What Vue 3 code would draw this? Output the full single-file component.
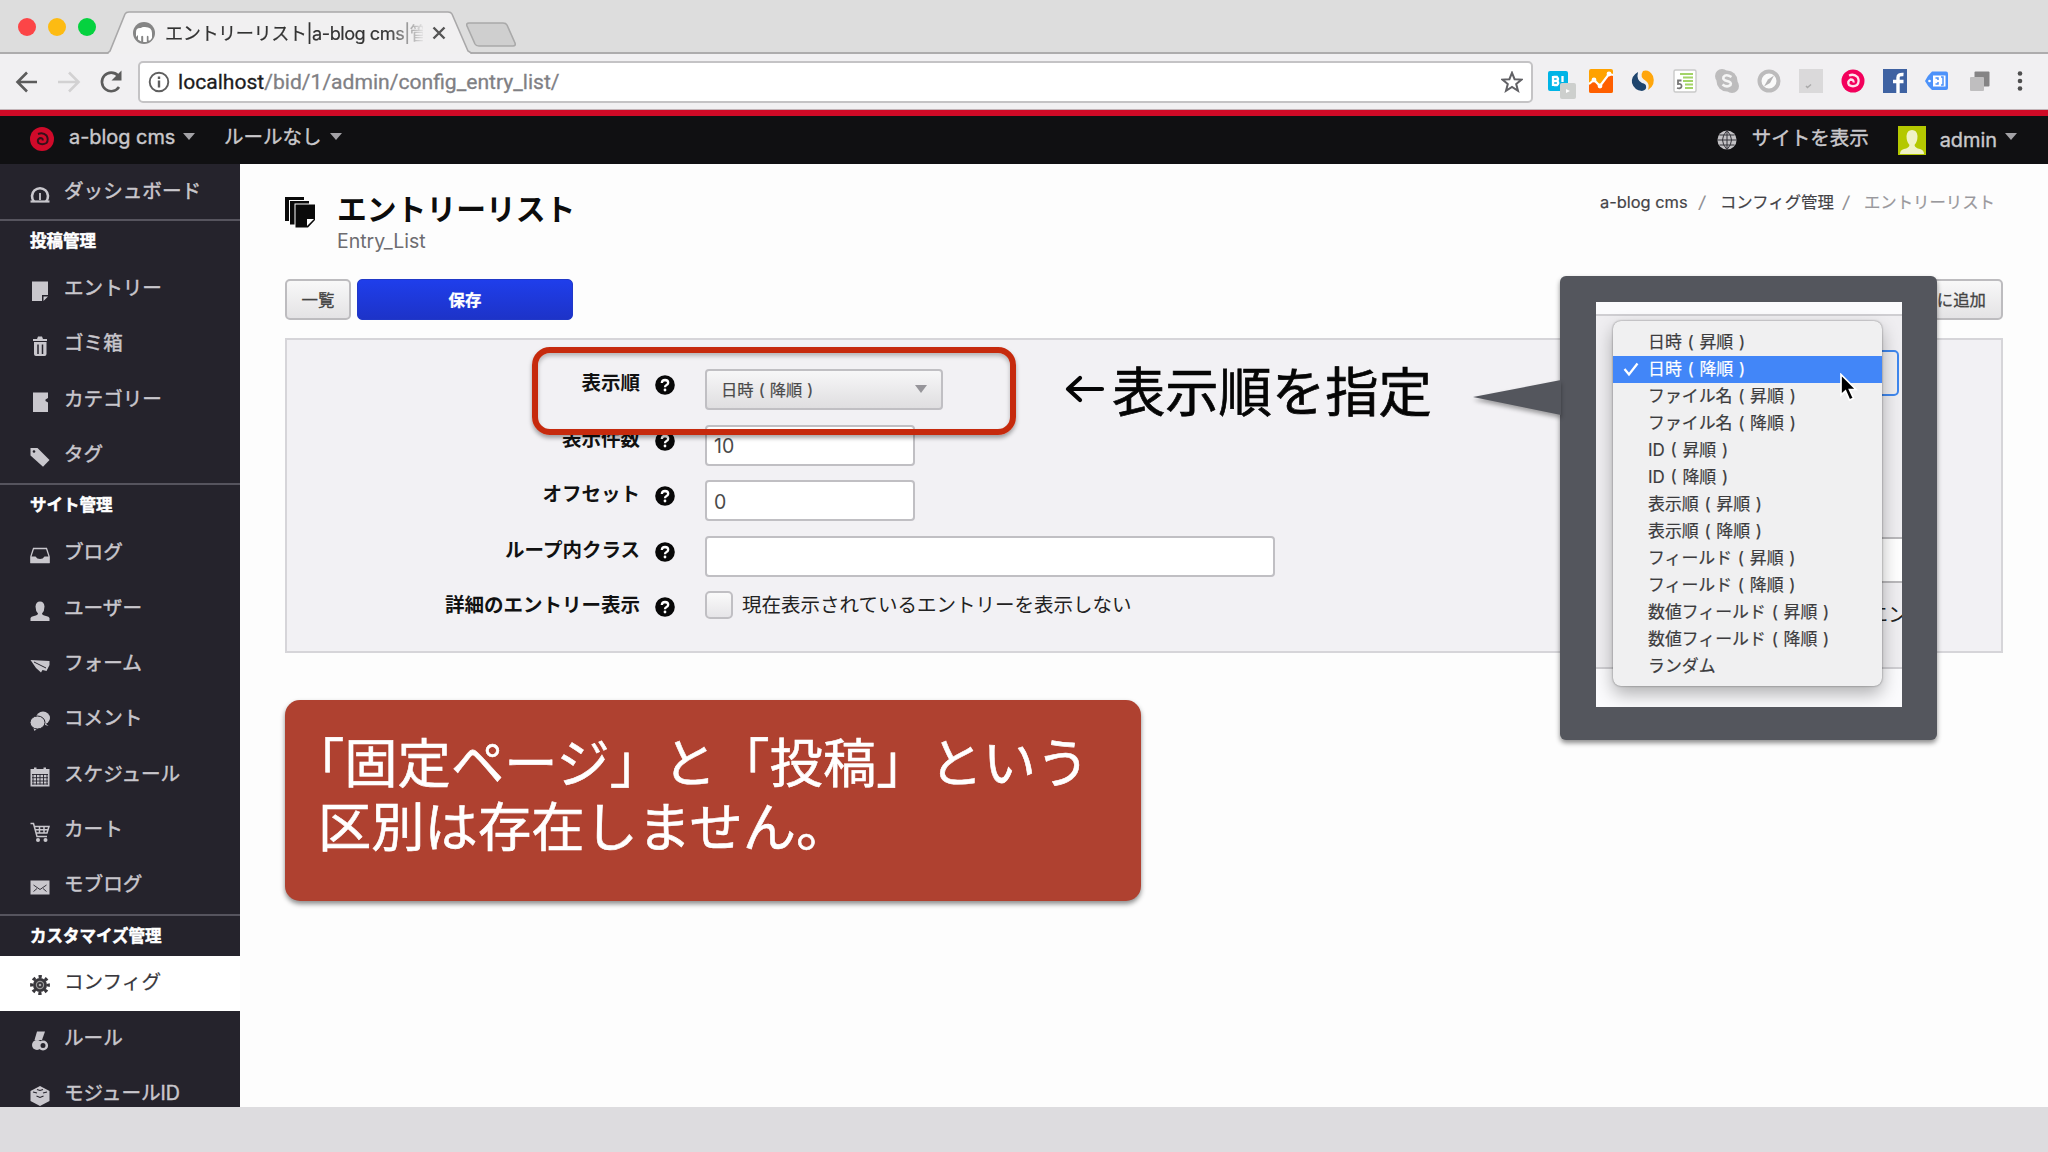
<template>
  <div class="screen">
    <div class="tabstrip">
      <div class="lights">
        <span class="light red"></span>
        <span class="light yellow"></span>
        <span class="light green"></span>
      </div>
      <div class="tab">
        <svg class="tab-shape" width="366" height="43" viewBox="0 0 366 43">
          <path d="M0 42.5 L3 40 L18 3 Q19 1 22 1 H341 Q344 1 345 3 L361 40 L365 42.5" fill="#f1f0f1" stroke="#a9a8a9" stroke-width="1.6" />
          <path d="M2 43 H363" stroke="#f1f0f1" stroke-width="2" />
        </svg>
        <svg class="favicon" width="24" height="24" viewBox="0 0 24 24">
          <circle cx="12" cy="12" r="11" fill="#858585" />
          <path d="M4 16 V11 Q4 6.500 9 7 Q10 5.500 13 6 Q20 6 20 12 V17 L18 19.500 H16.500 V15.500 Q15.500 14 14.800 15.500 V21 H11.200 V15.500 Q10.200 14 9.200 15.500 V20.500 L6 18.500 V14 Z" fill="#fff" />
        </svg>
        <span class="tab-title">エントリーリスト|a-blog cms|管</span>
        <svg class="tab-close" width="14" height="14" viewBox="0 0 14 14"><path d="M1.500 1.500 L12.500 12.500 M12.500 1.500 L1.500 12.500" stroke="#555" stroke-width="2.4" /></svg>
      </div>
      <svg class="new-tab" width="52" height="26" viewBox="0 0 52 26">
        <path d="M4 1 H38 Q41 1 42 3 L50 21 Q51 24 48 24 H14 Q11 24 10 22 L2 4 Q1 1 4 1 Z" fill="#cfcfcf" stroke="#a9a9a9" stroke-width="1.6" />
      </svg>
    </div>

    <div class="toolbar">
      <svg class="nav" width="128" height="30" viewBox="0 0 128 30" fill="none" stroke-width="2.6">
        <path d="M28 15 H9 M18 5.500 L8.500 15 L18 24.500" stroke="#5c5c5c" />
        <path d="M49 15 H68 M60 5.500 L69.500 15 L60 24.500" stroke="#d2d1d2" />
        <path d="M110 20 A9.300 9.300 0 1 1 109 8.500" stroke="#5c5c5c" />
        <path d="M112.500 3.500 V13.500 H102.500 Z" fill="#5c5c5c" />
      </svg>
      <div class="urlbar">
        <svg width="22" height="22" viewBox="0 0 22 22">
          <circle cx="11" cy="11" r="9.300" fill="none" stroke="#5f5f5f" stroke-width="1.9" />
          <path d="M11 9.500 V16.500 M11 5.500 V8" stroke="#5f5f5f" stroke-width="2.400" />
        </svg>
        <span class="url"><b>localhost</b>/bid/1/admin/config_entry_list/</span>
        <svg width="22" height="22" viewBox="0 0 22 22">
          <path d="M11 1.800 L13.600 8.200 L20.500 8.600 L15.200 13 L17 19.800 L11 16 L5 19.800 L6.800 13 L1.500 8.600 L8.400 8.200 Z" fill="none" stroke="#616165" stroke-width="2" />
        </svg>
      </div>
      <div class="extensions">
        <svg viewBox="0 0 30 30">
          <rect x="4" y="5" width="20" height="20" rx="2" fill="#00b4e6" />
          <path d="M9 10 V20 M9.500 11 H13 Q15 13 13 15 H10 M13 15 Q15.500 17 13 19 H10 M18.500 10 V16 M18.500 18 V20" fill="none" stroke="#fff" stroke-width="2.300" />
          <rect x="16" y="17" width="16" height="16" rx="2" fill="#cdcfcd" />
          <path d="M22 23 L26 25 L22 27 Z" fill="#fff" />
        </svg>
        <svg viewBox="0 0 30 30">
          <rect x="3" y="3" width="24" height="24" rx="2" fill="#ffa200" />
          <path d="M3 19 L8 14 L14 20 L23 7 L27 10 V25 Q27 27 25 27 H5 Q3 27 3 25 Z" fill="#ff5f00" />
          <path d="M3 18 L8 14 L14 20 L23 8 L27 9" fill="none" stroke="#fff" stroke-width="2.200" />
          <g fill="#fff"><circle cx="8" cy="14" r="2.400" /><circle cx="14" cy="20" r="2.400" /><circle cx="23" cy="8" r="2.400" /></g>
        </svg>
        <svg viewBox="0 0 30 30">
          <path d="M10 6 Q3 10 4 17 Q6 24 14 25 Q19 24 18 20 Q18 18 14 17 Q8 14 10 6 Z" fill="#1f456e" />
          <path d="M15 5 Q21 3 25 10 Q28 19 20 24 Q22 18 18 15 Q11 11 15 5 Z" fill="#ffa60c" />
        </svg>
        <svg viewBox="0 0 30 30">
          <rect x="4" y="4" width="22" height="22" rx="1.500" fill="#fff" stroke="#c9c9c9" stroke-width="1.400" />
          <path d="M10 8 H23 M13 11.500 H23 M13 15 H23 M15 18.500 H23 M15 22 H23" stroke="#a3d468" stroke-width="2" />
          <path d="M11.500 14.500 H8 V18 Q12 17.500 11.500 20.500 Q11 23 7 22" fill="none" stroke="#777" stroke-width="1.800" />
        </svg>
        <svg viewBox="0 0 30 30">
          <circle cx="10" cy="10" r="7" fill="#bdbcbd" /><circle cx="20" cy="20" r="7" fill="#bdbcbd" /><circle cx="15" cy="15" r="10.500" fill="#bdbcbd" />
          <path d="M19.500 11 Q14 7.500 11.500 11 Q10.500 14 15 15 Q20 16 18.500 19 Q15 22 10.500 18.500" fill="none" stroke="#f5f5f5" stroke-width="2.600" />
        </svg>
        <svg viewBox="0 0 30 30">
          <circle cx="15" cy="15" r="9.500" fill="#fafafa" stroke="#bcbbbc" stroke-width="4" />
          <path d="M20 9.500 L16 17 L10 20.500 L14 13.500 Z" fill="#b5b4b5" />
        </svg>
        <svg viewBox="0 0 30 30"><rect x="3" y="3" width="24" height="24" fill="#dad9da" /><path d="M10 20 L11.500 21.500 L15 18.500" fill="none" stroke="#aaa" stroke-width="1.500" /></svg>
        <svg viewBox="0 0 30 30">
          <circle cx="15" cy="15" r="11.500" fill="#f3005c" />
          <path d="M11 9.500 Q16 7.500 19.500 11 Q22 15.500 19 19 Q15 21.500 11 19 Q9 15.500 12.500 13.500 Q16 13.500 15.500 16.500" fill="none" stroke="#ffe3ec" stroke-width="2.300" />
        </svg>
        <svg viewBox="0 0 30 30">
          <rect x="3" y="3" width="24" height="24" fill="#3f62a2" />
          <path d="M18 27 V11.500 Q18 8 23.500 8.500 M13 15.500 H23.500" fill="none" stroke="#fff" stroke-width="3.400" />
        </svg>
        <svg viewBox="0 0 30 30">
          <path d="M10 5.500 H24 Q26 5.500 26 7.500 V22 Q26 24 24 24 H10 Q6 21 3 15 Q6 9 10 5.500 Z" fill="#4c92fa" />
          <rect x="11" y="9.500" width="12.500" height="11" fill="#fff" /><circle cx="7.500" cy="15" r="1.300" fill="#fff" />
          <path d="M13.500 12 H16 V14 M13.500 18 H16 V16 M19 11 H21 V19 H19" fill="none" stroke="#4c92fa" stroke-width="1.500" />
        </svg>
        <svg viewBox="0 0 30 30">
          <rect x="10.500" y="5.500" width="15" height="15" rx="1" fill="#858485" /><rect x="6" y="11" width="14" height="14" rx="1" fill="#bfbebf" />
        </svg>
        <svg viewBox="0 0 30 30" fill="#4f4f4f"><circle cx="14" cy="7.500" r="2.300" /><circle cx="14" cy="15" r="2.300" /><circle cx="14" cy="22.500" r="2.300" /></svg>
      </div>
    </div>

    <header class="topbar">
      <svg class="logo" width="24" height="24" viewBox="0 0 24 24">
        <circle cx="12" cy="12" r="12" fill="#d00a2a" />
        <path d="M8 7 Q13 5 16.500 8.500 Q19 12.500 16.500 16 Q12 18.500 8.500 16 Q6.500 12.500 10 11 Q13.500 11 12.500 13.500" fill="none" stroke="#35101a" stroke-width="2" />
      </svg>
      <span class="top-text blog-name">a-blog cms</span>
      <span class="caret"></span>
      <span class="top-text rule-name">ルールなし</span>
      <span class="caret"></span>
      <span class="spacer"></span>
      <svg width="20" height="20" viewBox="0 0 20 20">
        <circle cx="10" cy="10" r="9.600" fill="#c3c2c5" />
        <path d="M0 10 H20 M10 0 V20 M2.500 5 H17.500 M2.500 15 H17.500 M10 0.500 Q1 10 10 19.500 Q19 10 10 0.500" fill="none" stroke="#35343a" stroke-width="1" />
      </svg>
      <span class="top-text view-site">サイトを表示</span>
      <svg class="avatar" width="28" height="29" viewBox="0 0 28 29">
        <rect width="28" height="29" fill="#b4c800" />
        <path d="M2 28 Q2 24 6 23 Q11 22 11.500 19 Q8.500 16 8.500 10 Q9 4 14 4 Q19 4 19.500 10 Q19.500 16 16.500 19 Q17 22 22 23 Q26 24 26 28 Z" fill="#f0f2c6" />
      </svg>
      <span class="top-text admin">admin</span>
      <span class="caret"></span>
    </header>

    <div class="body">
      <nav class="sidebar">
        <ul v-for="(group, i) in menu" :key="i" class="group">
          <li v-if="group.title" class="heading">{{ group.title }}</li>
          <li v-for="item in group.items" :key="item.label" class="item" :class="{ active: item.active }">
            <svg width="20" height="20" viewBox="0 0 20 20" v-html="icons[item.icon]"></svg>
            <span>{{ item.label }}</span>
          </li>
        </ul>
      </nav>

      <main class="content">
        <div class="page-head">
          <svg class="page-icon" width="32" height="32" viewBox="0 0 32 32">
            <path d="M0 0 H19 V3 H4 V24 H0 Z M5 4 H24 V6.500 H9.500 V27.500 H5 Z M10.500 7.500 H30 V23 L23 30.500 H10.500 Z" fill="#0a0a0a" />
            <path d="M22 29 V22 H29 Z" fill="#fff" />
          </svg>
          <div class="titles">
            <h1>エントリーリスト</h1>
            <p>Entry_List</p>
          </div>
          <div class="breadcrumb">
            <span class="crumb-home">a-blog cms</span><i>/</i><span>コンフィグ管理</span><i>/</i><span class="current">エントリーリスト</span>
          </div>
        </div>

        <div class="actions">
          <button class="btn list">一覧</button>
          <button class="btn save">保存</button>
          <button class="btn quick">に追加</button>
        </div>

        <section class="panel">
          <div v-for="row in rows" :key="row.label" class="row">
            <label>{{ row.label }}</label>
            <svg class="help" width="20" height="20" viewBox="0 0 20 20">
              <circle cx="10" cy="10" r="9.800" fill="#080808" />
              <path d="M6.800 8 Q7 5 10 5 Q13.200 5.200 13.200 7.800 Q13 9.500 11.200 10.200 Q10 10.800 10 12.200" fill="none" stroke="#fff" stroke-width="2.300" />
              <circle cx="10" cy="15" r="1.400" fill="#fff" />
            </svg>
            <div v-if="row.type === 'select'" class="select"><span>{{ row.value }}</span><b></b></div>
            <div v-else-if="row.type === 'check'" class="check"><b></b><span>{{ row.value }}</span></div>
            <div v-else class="input" :class="row.type">{{ row.value }}</div>
          </div>
        </section>
      </main>
    </div>

    <div class="desk"></div>

    <div class="highlight"></div>
    <div class="note">
      <svg width="40" height="28" viewBox="0 0 40 28"><path d="M37 14 H4 M15 3 L3 14 L15 25" fill="none" stroke="#050505" stroke-width="4.200" stroke-linecap="round" stroke-linejoin="round" /></svg>
      <span>表示順を指定</span>
    </div>

    <div class="message">
      <p class="first">「固定ページ」と「投稿」という</p>
      <p>区別は存在しません。</p>
    </div>

    <div class="callout">
      <svg class="pointer" width="88" height="36" viewBox="0 0 88 36"><path d="M88 1 L0 18 L88 36 Z" fill="#54565d" /></svg>
      <div class="view">
        <div class="view-panel">
          <div class="view-select"></div>
          <div class="view-input"></div>
          <div class="view-text">エン</div>
        </div>
        <ul class="popup">
          <li v-for="(option, i) in options" :key="option" :class="{ picked: i === 1 }">
            <svg width="16" height="16" viewBox="0 0 16 16"><path v-if="i === 1" d="M1.500 8 L6 13.500 L14.500 2.500" fill="none" stroke="#fff" stroke-width="2.300" /></svg>
            <span>{{ option }}</span>
          </li>
        </ul>
        <svg class="cursor" width="20" height="30" viewBox="0 0 20 30">
          <path d="M2 1.500 V22 L6.500 18 L10.500 27 L14.500 25.200 L10.500 16.500 H17 Z" fill="#000" stroke="#fff" stroke-width="1.700" />
        </svg>
      </div>
    </div>
  </div>
</template>

<script setup>
const menu = [
  { items: [{ label: 'ダッシュボード', icon: 'gauge' }] },
  {
    title: '投稿管理',
    items: [
      { label: 'エントリー', icon: 'note' },
      { label: 'ゴミ箱', icon: 'trash' },
      { label: 'カテゴリー', icon: 'category' },
      { label: 'タグ', icon: 'tag' },
    ],
  },
  {
    title: 'サイト管理',
    items: [
      { label: 'ブログ', icon: 'tray' },
      { label: 'ユーザー', icon: 'user' },
      { label: 'フォーム', icon: 'plane' },
      { label: 'コメント', icon: 'comment' },
      { label: 'スケジュール', icon: 'calendar' },
      { label: 'カート', icon: 'cart' },
      { label: 'モブログ', icon: 'mail' },
    ],
  },
  {
    title: 'カスタマイズ管理',
    items: [
      { label: 'コンフィグ', icon: 'gear', active: true },
      { label: 'ルール', icon: 'rule' },
      { label: 'モジュールID', icon: 'box' },
    ],
  },
];

// 20x20 のアイコン。色は currentColor、抜きは var(--bg)
const icons = {
  gauge: '<path d="M4 17.500 A8 8 0 1 1 16 17.500" fill="none" stroke="currentColor" stroke-width="2.600"/><path d="M0.500 17.500 H19.500" stroke="currentColor" stroke-width="2.200"/><path d="M10 9 V16" stroke="currentColor" stroke-width="1.800"/>',
  note: '<path d="M2 0.500 H18 V14 H12 V20 H2 Z M13.500 15.500 H18 L13.500 20 Z" fill="currentColor"/>',
  trash: '<path d="M3 3 H7 L8 0.500 H12 L13 3 H17 V5 H3 Z M4 6 H16.500 V18 Q16.500 20 14.500 20 H6 Q4 20 4 18 Z" fill="currentColor"/><path d="M8 8.500 V18 M12.500 8.500 V18" stroke="var(--bg)" stroke-width="1.500"/>',
  category: '<path d="M3 0.500 H18 V6 L15.500 7.500 V9 L18 10.500 V20 H3 Z" fill="currentColor"/>',
  tag: '<path d="M0.500 1 H7.500 L19.500 13 L13 19.800 L0.500 8.500 Z" fill="currentColor"/><circle cx="4" cy="4.500" r="1.300" fill="var(--bg)"/>',
  tray: '<path d="M3.500 3.500 H16.500 L19 11 V17.500 H1 V11 Z" fill="none" stroke="currentColor" stroke-width="1.300"/><path d="M0.500 11.500 H5.500 Q7 14 10 14 Q13 14 14.500 11.500 H19.500 V18 H0.500 Z" fill="currentColor"/>',
  user: '<path d="M0.500 20 V17 Q1 15.500 4 15 Q8 14 8 12.500 Q5.500 10 5.500 5.500 Q6 0.500 10 0.500 Q14 0.500 14.500 5.500 Q14.500 10 12 12.500 Q12 14 16 15 Q19 15.500 19.500 17 V20 Z" fill="currentColor"/>',
  plane: '<path d="M0.500 4 L19.500 5 V9 L16.500 15 L12.500 14 L11 16.500 L6 12 Z" fill="currentColor"/><path d="M4 6 L16 12" stroke="var(--bg)" stroke-width="1"/>',
  comment: '<ellipse cx="13" cy="7" rx="7" ry="6.500" fill="currentColor"/><path d="M15 12 L18.500 15 L12 13 Z M3 16 L4.500 20 L9 16 Z" fill="currentColor"/><ellipse cx="7.500" cy="11.500" rx="7.500" ry="6.500" fill="currentColor" stroke="var(--bg)"/>',
  calendar: '<path d="M0.500 2 H4 V0.500 H6.500 V2 H13.500 V0.500 H16 V2 H19.500 V19.500 H0.500 Z" fill="currentColor"/><path d="M2 7.500 H18 M2 10.700 H18 M2 14 H18 M2 17 H18 M3 7 V17.500 M6.500 7 V17.500 M10 7 V17.500 M13.500 7 V17.500 M17 7 V17.500" stroke="var(--bg)" stroke-width="0.900"/>',
  cart: '<path d="M0.500 1.500 H3.500 L7 14.500 H17 M4.500 4.500 H19 L17 11 H6 M5 7.700 H18 M9.500 4.500 V11 M14 4.500 V11" fill="none" stroke="currentColor" stroke-width="1.500"/><circle cx="8" cy="18" r="2" fill="currentColor"/><circle cx="15.500" cy="18" r="2" fill="currentColor"/>',
  mail: '<rect x="0.500" y="3.500" width="19" height="14" fill="currentColor"/><path d="M3.500 8 L10 12.500 L16.500 8 M3.500 14.500 L7 11.500 M16.500 14.500 L13 11.500" fill="none" stroke="var(--bg)" stroke-width="0.900"/>',
  gear: '<circle cx="10" cy="10" r="7" fill="currentColor"/><circle cx="10" cy="10" r="8.300" fill="none" stroke="currentColor" stroke-width="3.200" stroke-dasharray="3.250 3.250" stroke-dashoffset="1.600"/><circle cx="10" cy="10" r="3.600" fill="none" stroke="#999" stroke-width="1.200"/><circle cx="10" cy="10" r="1.300" fill="#aaa"/>',
  rule: '<path d="M7 0.500 H15 L12 9 H4.500 Z" fill="currentColor"/><circle cx="7" cy="14" r="5" fill="currentColor"/><circle cx="13" cy="14.500" r="3.800" fill="var(--bg)" stroke="currentColor" stroke-width="2.600"/>',
  box: '<path d="M10 0 L19.500 5 V15 L10 20 L0.500 15 V5 Z" fill="currentColor"/><path d="M3 6 L7 7 M13 7 L17 6 M6.500 10 L10 11.500 L13.500 10 M7 3.500 L10 4.500 L13 3.500" fill="none" stroke="var(--bg)" stroke-width="1.100"/>',
};

const rows = [
  { label: '表示順', type: 'select', value: '日時 ( 降順 )' },
  { label: '表示件数', type: 'short', value: '10' },
  { label: 'オフセット', type: 'short', value: '0' },
  { label: 'ループ内クラス', type: 'long', value: '' },
  { label: '詳細のエントリー表示', type: 'check', value: '現在表示されているエントリーを表示しない' },
];

const options = [
  '日時 ( 昇順 )',
  '日時 ( 降順 )',
  'ファイル名 ( 昇順 )',
  'ファイル名 ( 降順 )',
  'ID ( 昇順 )',
  'ID ( 降順 )',
  '表示順 ( 昇順 )',
  '表示順 ( 降順 )',
  'フィールド ( 昇順 )',
  'フィールド ( 降順 )',
  '数値フィールド ( 昇順 )',
  '数値フィールド ( 降順 )',
  'ランダム',
];
</script>

<style>
html,
body {
  margin: 0;
  overflow: hidden;
}
</style>

<style scoped>
.screen {
  position: relative;
  display: flex;
  flex-direction: column;
  width: 2048px;
  height: 1152px;
  overflow: hidden;
  background: #fdfdfd;
  font-family: Inter, "Noto Sans CJK JP", sans-serif;
  color: #222;
}
.screen * {
  box-sizing: border-box;
}
ul,
p,
h1 {
  margin: 0;
  padding: 0;
  list-style: none;
}
svg {
  flex: none;
}

/* ブラウザ */
.tabstrip {
  display: flex;
  flex: none;
  height: 54px;
  background: #dddddd;
  border-bottom: 2px solid #adacad;
}
.lights {
  display: flex;
  gap: 12px;
  width: 107px;
  padding: 18px 0 0 18px;
}
.light {
  width: 18px;
  height: 18px;
  border-radius: 50%;
}
.red { background: #fc4547; }
.yellow { background: #fdbb12; }
.green { background: #05d23f; }
.tab {
  position: relative;
  display: flex;
  align-items: center;
  width: 366px;
  height: 43px;
  margin-top: 11px;
  padding-left: 25px;
}
.tab-shape {
  position: absolute;
  left: 0;
  top: 0;
}
.favicon {
  position: relative;
}
.tab-title {
  position: relative;
  width: 258px;
  margin-left: 9px;
  overflow: hidden;
  font-size: 18.200px;
  line-height: 28px;
  letter-spacing: -0.500px;
  white-space: nowrap;
  color: #333;
  -webkit-text-stroke: 0.200px currentColor;
  -webkit-mask-image: linear-gradient(to right, #000 86%, transparent 101%);
  mask-image: linear-gradient(to right, #000 86%, transparent 101%);
}
.tab-close {
  position: relative;
  margin-left: 9px;
}
.new-tab {
  margin: 22px 0 0 -8px;
}
.toolbar {
  display: flex;
  flex: none;
  align-items: center;
  height: 56px;
  background: #f1f0f2;
  border-bottom: 1px solid #c3b4b8;
}
.nav {
  margin-left: 8px;
  width: 130px;
}
.urlbar {
  display: flex;
  align-items: center;
  width: 1395px;
  height: 42px;
  padding: 0 8px 0 8px;
  background: #fff;
  border: 2px solid #c4c3c5;
  border-radius: 5px;
}
.url {
  flex: 1;
  margin-left: 8px;
  font: 21.100px Roboto, sans-serif;
  color: #808084;
  -webkit-text-stroke: 0.300px currentColor;
}
.url b {
  font-weight: 400;
  color: #1c1c1e;
}
.extensions {
  display: flex;
  gap: 12px;
  margin: -1px 0 0 11px;
}
.extensions svg {
  width: 30px;
  height: 30px;
  overflow: visible;
}

/* ヘッダー */
.topbar {
  display: flex;
  flex: none;
  align-items: center;
  height: 54px;
  padding: 0 31px 0 30px;
  border-top: 6px solid #cf0a26;
  background: #101012;
  color: #c9c8cb;
}
.logo {
  margin-top: -2px;
}
.top-text {
  font-size: 19.500px;
  line-height: 28px;
  white-space: nowrap;
  -webkit-text-stroke: 0.400px currentColor;
}
.blog-name {
  width: 109px;
  margin: -6px 5px 0 15px;
  font-size: 19.900px;
}
.rule-name {
  margin: -6px 8px 0 29px;
}
.caret {
  margin-top: -8px;
  border: 6px solid transparent;
  border-top: 7px solid #a3a2a6;
  border-bottom: 0;
}
.spacer {
  flex: 1;
}
.view-site {
  margin: -4px 29px 0 15px;
}
.avatar {
  margin-top: 1px;
}
.admin {
  margin: -1px 8px 0 14px;
  font-size: 19.900px;
}

/* サイドバー */
.body {
  display: flex;
  flex: none;
  height: 943px;
  overflow: hidden;
}
.sidebar {
  --bg: #25232c;
  flex: none;
  width: 240px;
  background: #25232c;
  color: #c9c7cd;
}
.group + .group {
  padding-bottom: 0.500px;
  border-top: 2px solid #56545e;
}
.heading {
  height: 40px;
  padding-left: 30px;
  font-size: 16.500px;
  font-weight: 700;
  line-height: 41px;
  color: #fff;
  -webkit-text-stroke: 0.500px #fff;
}
.item {
  display: flex;
  gap: 15px;
  align-items: center;
  height: 55.400px;
  padding-left: 30px;
  font-size: 19.600px;
  line-height: 28px;
  -webkit-text-stroke: 0.450px currentColor;
}
.item svg {
  margin-top: 4px;
}
.item span {
  margin: -2px 0 0 -1px;
}
.active {
  background: #fff;
  color: #38373c;
  -webkit-text-stroke-width: 0.200px;
}

/* コンテンツ */
.content {
  flex: 1;
  padding: 0 45px 0 45px;
}
.page-head {
  display: flex;
  height: 115px;
}
.page-icon {
  margin-top: 33px;
}
.titles {
  flex: 1;
  padding: 25px 0 0 20px;
}
h1 {
  font-size: 29.800px;
  line-height: 40px;
  color: #0c0c0c;
}
.titles p {
  font-size: 19.500px;
  line-height: 25px;
  color: #6d6c70;
}
.breadcrumb {
  display: flex;
  margin-right: 8px;
  padding-top: 26px;
  font-size: 16.400px;
  line-height: 24px;
  color: #444347;
  -webkit-text-stroke: 0.200px currentColor;
}
.breadcrumb i {
  width: 30px;
  padding-left: 9px;
  color: #8b8a8e;
}
.crumb-home {
  width: 90px;
}
.current {
  color: #99989c;
}
.actions {
  display: flex;
  gap: 6px;
  height: 59px;
}
.btn {
  height: 41px;
  padding: 0 0 2px;
  border: 2px solid #bdbcbf;
  border-radius: 5px;
  background: linear-gradient(#f8f8f8, #e4e3e5);
  font: 16.400px Inter, "Noto Sans CJK JP", sans-serif;
  color: #444;
  -webkit-text-stroke: 0.300px currentColor;
}
.list {
  width: 66px;
}
.save {
  width: 216px;
  border: 1px solid #2038c8;
  background: linear-gradient(#1f3eeb, #1d33c8);
  font-weight: 700;
  color: #fff;
}
.quick {
  width: 120px;
  margin-left: auto;
  padding-right: 15px;
  text-align: right;
}
.panel {
  height: 315px;
  padding-top: 29px;
  border: 2px solid #d6d5d9;
  background: #f2f1f4;
}
.row {
  display: flex;
  height: 55.500px;
}
.row label {
  width: 353px;
  font-size: 19.500px;
  font-weight: 700;
  line-height: 28px;
  text-align: right;
  color: #111;
}
.help {
  margin: 6px 30px 0 15px;
}
.select,
.input {
  display: flex;
  align-items: center;
  height: 41px;
  border: 2px solid #c0bfc3;
  border-radius: 4px;
  background: #fff;
  color: #4a4a4a;
}
.select {
  width: 238px;
  justify-content: space-between;
  padding: 0 14px 1px 14px;
  background: linear-gradient(#f7f7f8, #dfdee0);
  font-size: 16.300px;
  word-spacing: 0.500px;
  -webkit-text-stroke: 0.200px currentColor;
}
.select b {
  border: 6px solid transparent;
  border-top: 8px solid #96959a;
  border-bottom: 0;
}
.input {
  padding: 2px 0 0 7px;
  font: 19.500px Inter, sans-serif;
}
.short {
  width: 210px;
}
.long {
  width: 570px;
}
.check {
  display: flex;
  font-size: 19.500px;
  line-height: 28px;
}
.check b {
  width: 28px;
  height: 28px;
  margin: 0 9px 0 0;
  border: 2px solid #c0bfc3;
  border-radius: 5px;
  background: linear-gradient(#fafafa, #e6e5e8);
}
.desk {
  flex: 1;
  background: #dddcdf;
}

/* 注釈 */
.highlight {
  position: absolute;
  left: 532px;
  top: 347px;
  width: 484px;
  height: 88px;
  border: 6px solid #c62a0d;
  border-radius: 18px;
  box-shadow: 0 3px 4px rgba(0, 0, 0, 0.350), inset 0 3px 4px rgba(0, 0, 0, 0.250);
}
.note {
  position: absolute;
  left: 1065px;
  top: 349px;
  display: flex;
  gap: 7px;
  align-items: center;
  font-family: "Noto Sans CJK JP", sans-serif;
  font-size: 53.300px;
  line-height: 80px;
  white-space: nowrap;
  color: #050505;
  -webkit-text-stroke: 0.700px currentColor;
}
.message {
  position: absolute;
  left: 285px;
  top: 700px;
  width: 856px;
  height: 201px;
  padding: 28px 0 0 33px;
  border-radius: 15px;
  background: #af4130;
  box-shadow: 0 3px 5px rgba(0, 0, 0, 0.450);
  font-family: "Noto Sans CJK JP", sans-serif;
  font-size: 53.300px;
  line-height: 64px;
  white-space: nowrap;
  color: #fff;
  -webkit-text-stroke: 0.600px currentColor;
}
.first {
  margin-left: -27px;
}
.callout {
  position: absolute;
  left: 1560px;
  top: 276px;
  width: 377px;
  height: 464px;
  padding: 26px 35px 33px 36px;
  border-radius: 6px;
  background: #54565d;
  box-shadow: 0 3px 5px rgba(0, 0, 0, 0.450);
}
.pointer {
  position: absolute;
  left: -87px;
  top: 103px;
  filter: drop-shadow(0 3px 2px rgba(0, 0, 0, 0.350));
}
.view {
  position: relative;
  height: 405px;
  padding-top: 12px;
  overflow: hidden;
  background: #fbfbfd;
}
.view-panel {
  position: relative;
  height: 355px;
  border: 2px solid #cfced2;
  border-width: 2px 0;
  background: #efeef1;
}
.view-select {
  position: absolute;
  right: 3px;
  top: 34px;
  width: 60px;
  height: 46px;
  border: 2px solid #3f87ee;
  border-radius: 5px;
}
.view-input {
  position: absolute;
  right: 0;
  top: 221px;
  width: 60px;
  height: 46px;
  border: 2px solid #b9b8bb;
  border-width: 2px 0;
  background: #fff;
}
.view-text {
  position: absolute;
  left: 272px;
  top: 285px;
  font-size: 20px;
  line-height: 28px;
  white-space: nowrap;
}
.popup {
  position: absolute;
  left: 17px;
  top: 19px;
  width: 269px;
  height: 365px;
  padding-top: 8px;
  border-radius: 8px;
  background: #f0f0f1;
  box-shadow: 0 0 2px rgba(0, 0, 0, 0.500), 0 8px 18px rgba(0, 0, 0, 0.300);
}
.popup li {
  display: flex;
  gap: 9px;
  align-items: center;
  height: 26.950px;
  padding-left: 10px;
  font-size: 16.900px;
  line-height: 26px;
  word-spacing: 1px;
  white-space: nowrap;
  color: #3c3c3e;
  -webkit-text-stroke: 0.200px currentColor;
}
.popup .picked {
  background: #4286f8;
  color: #fff;
}
.cursor {
  position: absolute;
  left: 243px;
  top: 71px;
}
</style>
